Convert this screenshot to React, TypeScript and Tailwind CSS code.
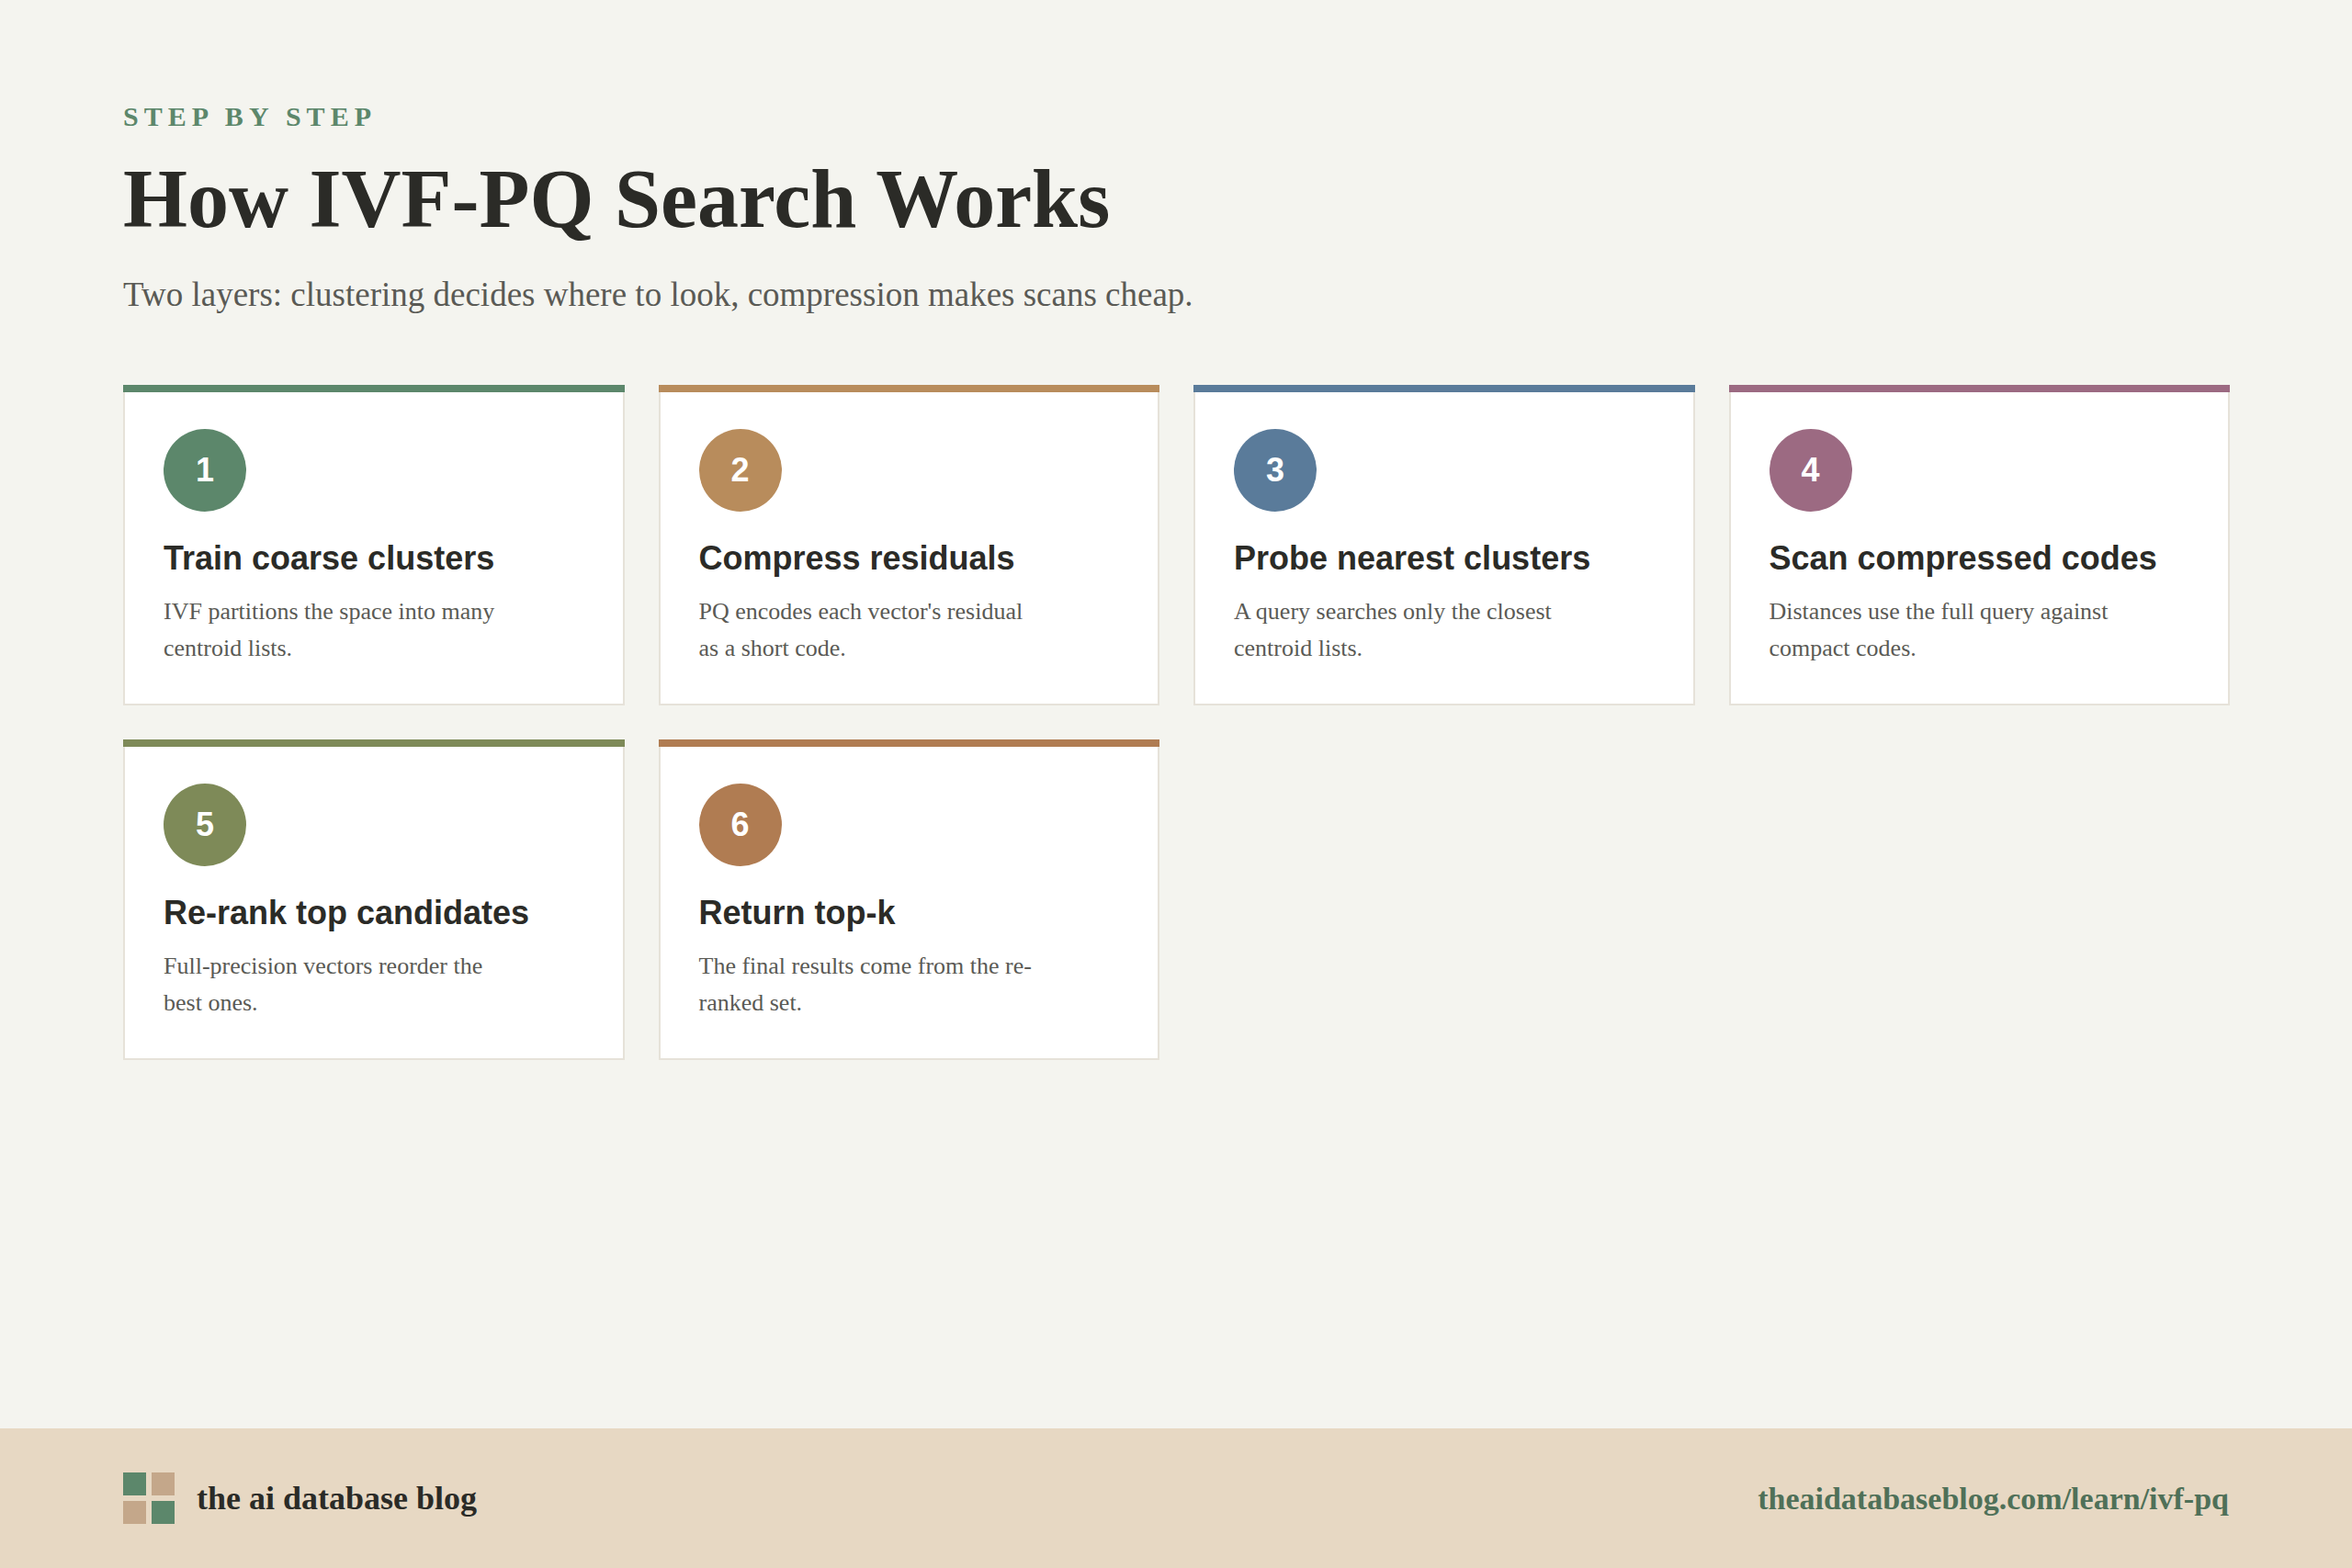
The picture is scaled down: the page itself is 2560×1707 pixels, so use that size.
const steps = [
  { n: 1, c: "bg-[#5c876b]", t: "Train coarse clusters", d: "IVF partitions the space into many centroid lists." },
  { n: 2, c: "bg-[#b88c5c]", t: "Compress residuals", d: "PQ encodes each vector's residual as a short code." },
  { n: 3, c: "bg-[#5a7b9a]", t: "Probe nearest clusters", d: "A query searches only the closest centroid lists." },
  { n: 4, c: "bg-[#9c6a82]", t: "Scan compressed codes", d: "Distances use the full query against compact codes." },
  { n: 5, c: "bg-[#7e8a58]", t: "Re-rank top candidates", d: "Full-precision vectors reorder the best ones." },
  { n: 6, c: "bg-[#b07c52]", t: "Return top-k", d: "The final results come from the re-ranked set." },
];

export default function App() {
  const serif = { fontFamily: '"Liberation Serif", "Times New Roman", serif' };
  const sans = { fontFamily: '"Liberation Sans", Arial, sans-serif' };
  return (
    <div className="w-[2560px] h-[1707px] bg-[#f4f4ef] flex flex-col" style={serif}>
      <div className="flex-1 px-[134px] pt-[112px]">
        <div className="text-[30px] font-bold tracking-[0.2em] text-[#5c876b] leading-none">STEP BY STEP</div>
        <h1 className="mt-[30px] text-[90px] font-bold text-[#2b2b27] leading-none">How IVF-PQ Search Works</h1>
        <p className="mt-[40px] text-[37px] text-[#5a5a55] leading-none">Two layers: clustering decides where to look, compression makes scans cheap.</p>
        <div className="mt-[80px] grid grid-cols-4 gap-[37px] w-[2293px]">
          {steps.map((s) => (
            <div key={s.n} className="h-[349px] bg-white border-2 border-[#e6e2d9] flex flex-col">
              <div className={`h-[8px] -mx-[2px] -mt-[2px] ${s.c}`} />
              <div className="px-[42px] pt-[40px]">
                <div className={`w-[90px] h-[90px] rounded-full ${s.c} flex items-center justify-center text-white text-[36px] font-bold`} style={sans}>{s.n}</div>
                <div className="mt-[28px] text-[36px] font-bold text-[#2b2b27] leading-tight" style={sans}>{s.t}</div>
                <div className="mt-[16px] text-[26px] leading-[40px] text-[#5a5a55] pr-[80px]">{s.d}</div>
              </div>
            </div>
          ))}
        </div>
      </div>
      <div className="h-[152px] bg-[#e7d8c3] px-[134px] flex items-center justify-between">
        <div className="flex items-center gap-[24px]">
          <div className="grid grid-cols-2 gap-[6px]">
            <div className="w-[25px] h-[25px] bg-[#5c876b]" />
            <div className="w-[25px] h-[25px] bg-[#c4a78a]" />
            <div className="w-[25px] h-[25px] bg-[#c4a78a]" />
            <div className="w-[25px] h-[25px] bg-[#5c876b]" />
          </div>
          <div className="text-[36px] font-bold text-[#2b2b27]">the ai database blog</div>
        </div>
        <div className="text-[34px] font-bold text-[#4f7058]">theaidatabaseblog.com/learn/ivf-pq</div>
      </div>
    </div>
  );
}
